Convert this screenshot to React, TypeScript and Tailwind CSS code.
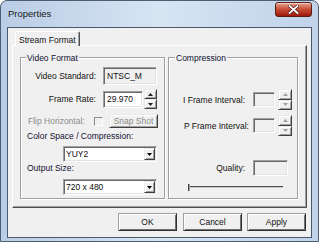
import React from "react";

const sunken =
  "border border-t-[#a0a0a0] border-l-[#a0a0a0] border-b-[#ffffff] border-r-[#ffffff] shadow-[inset_1px_1px_0_#696969,inset_-1px_-1px_0_#e3e3e3]";
const raised =
  "border border-t-[#e8e8e8] border-l-[#e8e8e8] border-b-[#404040] border-r-[#404040] shadow-[inset_1px_1px_0_#ffffff,inset_-1px_-1px_0_#a0a0a0]";

function Arrow({ dir, color }: { dir: "up" | "down"; color: string }) {
  return (
    <svg width="5" height="3" viewBox="0 0 5 3">
      {dir === "up" ? (
        <path d="M2.5 0 L5 3 L0 3 Z" fill={color} />
      ) : (
        <path d="M0 0 L5 0 L2.5 3 Z" fill={color} />
      )}
    </svg>
  );
}

function Spinner({ disabled, h, w }: { disabled?: boolean; h: string; w: string }) {
  const c = disabled ? "#a0a0a0" : "#202020";
  return (
    <div className={`flex flex-col ${h} ${w}`}>
      <div className={`${raised} flex-1 flex items-center justify-center bg-[#f0f0f0]`}>
        <Arrow dir="up" color={c} />
      </div>
      <div className={`${raised} flex-1 flex items-center justify-center bg-[#f0f0f0]`}>
        <Arrow dir="down" color={c} />
      </div>
    </div>
  );
}

function Combo({ value }: { value: string }) {
  return (
    <div className={`${sunken} w-[94px] h-[16px] bg-white flex items-stretch p-[1px]`}>
      <div className="flex-1 flex items-center pl-[1px] text-[#101010]">{value}</div>
      <div className={`${raised} w-[11px] flex items-center justify-center bg-[#f0f0f0]`}>
        <svg width="5" height="3" viewBox="0 0 5 3">
          <path d="M0 0 L5 0 L2.5 3 Z" fill="#000" />
        </svg>
      </div>
    </div>
  );
}

function Button({ label, cls }: { label: string; cls?: string }) {
  return (
    <div
      className={`w-[59px] h-[18px] flex items-center justify-center bg-[#f0f0f0] text-[#101010] border border-t-[#a0a0a0] border-l-[#a0a0a0] border-b-[#303030] border-r-[#303030] shadow-[inset_1px_1px_0_#ffffff,inset_-1px_-1px_0_#707070] ${cls ?? ""}`}
    >
      {label}
    </div>
  );
}

export default function App() {
  return (
    <div className="w-[319px] h-[242px] flex flex-col rounded-t-[7px] border border-[#4d5d72] bg-gradient-to-r from-[#b9cde6] via-[#d7e4f2] to-[#c0d3ea] overflow-hidden font-['Liberation_Sans',Arial,sans-serif] text-[8.5px] leading-[12px] text-[#111]">
      {/* Title bar */}
      <div className="h-[26px] flex items-start shrink-0">
        <div className="h-[26px] flex items-center pl-[7px] text-[9.5px] text-[#1a1a1a]">Properties</div>
        <div className="flex-1" />
        <div className="mt-[1px] mr-[6px] w-[37px] h-[15px] rounded-[3px] border border-[#5b1c14] bg-gradient-to-b from-[#e5a090] via-[#c84a34] to-[#9f150b] flex items-center justify-center shadow-[inset_0_1px_0_rgba(255,255,255,0.5)]">
          <svg width="11" height="9" viewBox="0 0 11 9">
            <path d="M1.5 1 L9.5 8 M9.5 1 L1.5 8" stroke="#4a1a14" strokeWidth="3.2" strokeLinecap="square" />
            <path d="M1.5 1 L9.5 8 M9.5 1 L1.5 8" stroke="#ffffff" strokeWidth="1.8" strokeLinecap="square" />
          </svg>
        </div>
      </div>

      {/* Client area */}
      <div className="ml-[6px] w-[305px] h-[211px] shrink-0 border border-[#4a5970] bg-[#f0f0f0] flex flex-col">
        {/* Tab header */}
        <div className="h-[17px] pl-[7px] flex items-start shrink-0">
          <div className="relative z-10 mt-[3px] h-[15px] w-[65px] bg-[#f0f0f0] border-t border-l border-r border-t-[#ffffff] border-l-[#ffffff] border-r-[#505050] rounded-t-[2px] flex items-center pl-[3px] pt-[2px] text-[#101010] shadow-[inset_-1px_0_0_#a0a0a0]">
            Stream Format
          </div>
        </div>

        {/* Tab panel */}
        <div className="ml-[4px] w-[295px] h-[163px] shrink-0 border border-t-[#ffffff] border-l-[#ffffff] border-b-[#505050] border-r-[#505050] shadow-[inset_-1px_-1px_0_#a0a0a0] pt-[11px] pl-[7px] flex gap-[3px]">
          {/* Video Format */}
          <div className="w-[145px] h-[142px] border border-[#a0a0a0] shadow-[inset_1px_1px_0_#ffffff,1px_1px_0_#ffffff] flex flex-col">
            <div className="-mt-[6px] ml-[5px] px-[1px] h-[12px] w-fit bg-[#f0f0f0] text-[#101030]">Video Format</div>

            <div className="mt-[3px] h-[18px] flex items-center">
              <div className="w-[75px] text-right">Video Standard:</div>
              <div className={`${sunken} ml-[7px] w-[54px] h-[18px] bg-[#f0f0f0] flex items-center pl-[3px]`}>NTSC_M</div>
            </div>

            <div className="mt-[4px] h-[20px] flex items-center">
              <div className="w-[75px] text-right">Frame Rate:</div>
              <div className={`${sunken} ml-[7px] w-[40px] h-[17px] bg-white flex items-center pl-[3px]`}>29.970</div>
              <div className="ml-[1px]">
                <Spinner h="h-[20px]" w="w-[13px]" />
              </div>
            </div>

            <div className="mt-[5px] h-[14px] flex items-center pl-[7px]">
              <div className="w-[66px] text-[#8a8a8a]">Flip Horizontal:</div>
              <div className="w-[9px] h-[9px] border border-t-[#8a8a8a] border-l-[#8a8a8a] border-b-[#ffffff] border-r-[#ffffff] bg-[#f0f0f0]" />
              <div className={`${raised} ml-[6px] w-[49px] h-[14px] bg-[#f0f0f0] flex items-center justify-center text-[#8a8a8a]`}>Snap Shot</div>
            </div>

            <div className="mt-[2px] h-[12px] pl-[6px] text-[#101030]">Color Space / Compression:</div>

            <div className="mt-[4px] h-[16px] pl-[42px]">
              <Combo value="YUY2" />
            </div>

            <div className="h-[12px] pl-[6px] text-[#101030]">Output Size:</div>

            <div className="mt-[5px] h-[16px] pl-[42px]">
              <Combo value="720 x 480" />
            </div>
          </div>

          {/* Compression */}
          <div className="w-[130px] h-[142px] border border-[#a0a0a0] shadow-[inset_1px_1px_0_#ffffff,1px_1px_0_#ffffff] flex flex-col">
            <div className="-mt-[6px] ml-[6px] px-[1px] h-[12px] w-fit bg-[#f0f0f0] text-[#101030]">Compression</div>

            <div className="mt-[25px] h-[21px] flex items-center">
              <div className="w-[76px] text-right">I Frame Interval:</div>
              <div className={`${sunken} ml-[8px] w-[22px] h-[15px] bg-[#f0f0f0]`} />
              <div className="ml-[3px]">
                <Spinner disabled h="h-[21px]" w="w-[14px]" />
              </div>
            </div>

            <div className="mt-[5px] h-[21px] flex items-center">
              <div className="w-[80px] text-right">P Frame Interval:</div>
              <div className={`${sunken} ml-[4px] w-[22px] h-[15px] bg-[#f0f0f0]`} />
              <div className="ml-[3px]">
                <Spinner disabled h="h-[21px]" w="w-[14px]" />
              </div>
            </div>

            <div className="mt-[24px] h-[16px] flex items-center">
              <div className="w-[76px] text-right">Quality:</div>
              <div className={`${sunken} ml-[8px] w-[35px] h-[16px] bg-[#f0f0f0]`} />
            </div>

            <div className="mt-[6px] h-[10px] ml-[19px] w-[95px] flex items-center">
              <div className="w-[2px] h-[7px] bg-[#404040] border-r border-r-[#a0a0a0]" />
              <div className="flex-1 h-[2px] border-t border-t-[#505050] border-b border-b-[#c8c8c8]" />
            </div>
          </div>
        </div>

        {/* Buttons */}
        <div className="mt-[5px] pr-[5px] flex justify-end">
          <Button label="OK" cls="mr-[6px]" />
          <Button label="Cancel" cls="mr-[5px]" />
          <Button label="Apply" />
        </div>
      </div>
    </div>
  );
}
